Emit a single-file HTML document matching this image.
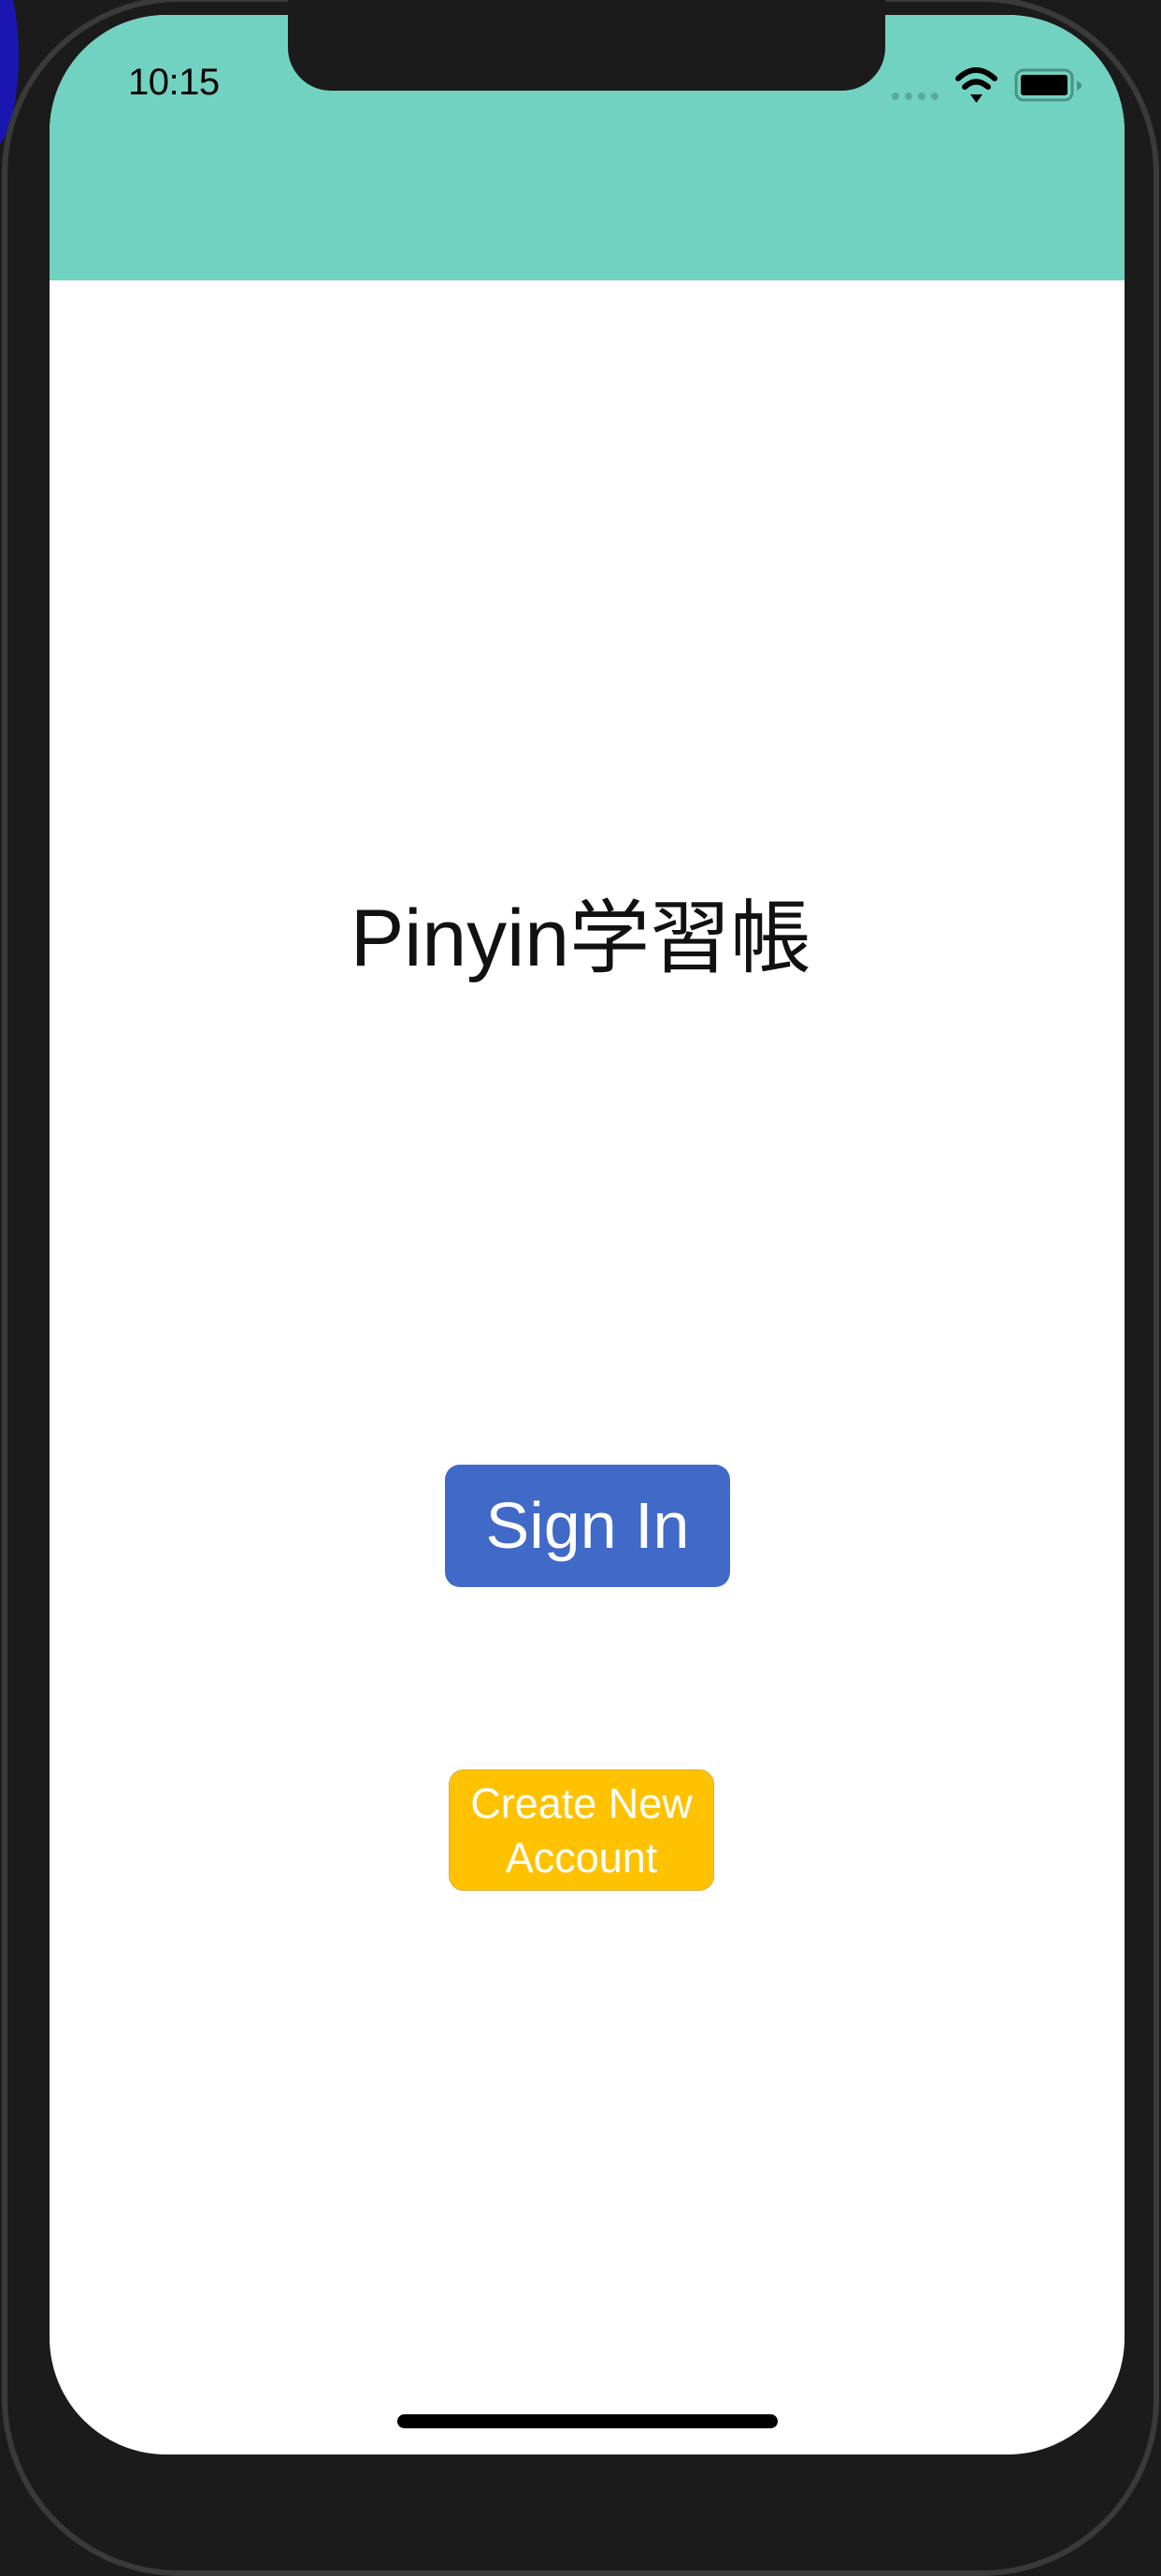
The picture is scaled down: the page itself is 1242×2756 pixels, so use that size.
<!DOCTYPE html>
<html><head><meta charset="utf-8"><style>
html,body{margin:0;padding:0;}
body{width:1242px;height:2688px;background:#1b1b1b;position:relative;overflow:hidden;font-family:"Liberation Sans","Noto Sans CJK JP",sans-serif;}
.bl{position:absolute;left:-40px;top:-40px;width:60px;height:200px;background:#1a17b0;border-radius:50%;}
.frame{position:absolute;left:2px;top:-4px;width:1238px;height:2760px;border-radius:190px;border:6px solid #3a3a3a;box-sizing:border-box;}
.screen{position:absolute;left:53px;top:16px;width:1150px;height:2610px;background:#fff;border-radius:125px;overflow:hidden;}
.teal{position:absolute;left:0;top:0;width:100%;height:284px;background:#72d2c1;}
.notch{position:absolute;left:308px;top:0;width:639px;height:97px;background:#1b1b1b;border-radius:0 0 46px 46px;}
.time{position:absolute;left:137px;top:66px;font-size:40px;color:#000;letter-spacing:-0.5px;}
.title{position:absolute;left:0;width:1242px;top:933px;text-align:center;font-size:86px;color:#111;}
.signin{position:absolute;left:476px;top:1567px;width:305px;height:131px;background:#4169c8;border-radius:16px;color:#fff;font-size:70px;text-align:center;line-height:131px;}
.create{position:absolute;left:480px;top:1893px;width:284px;height:130px;background:#ffc200;border-radius:16px;border:1px solid #d8b24a;box-sizing:border-box;color:#fff;font-size:45px;text-align:center;line-height:58px;padding-top:7px;}
.home{position:absolute;left:425px;top:2583px;width:407px;height:15px;background:#000;border-radius:8px;}
</style></head><body>
<div class="bl"></div>
<div class="frame"></div>
<div class="screen">
<div class="teal"></div>
</div>
<div class="notch"></div>
<div class="time">10:15</div>
<svg style="position:absolute;left:950px;top:68px" width="220" height="50" viewBox="950 68 220 50">
<g fill="#5aa99a"><circle cx="958" cy="103" r="4"/><circle cx="972" cy="103" r="4"/><circle cx="986" cy="103" r="4"/><circle cx="1000" cy="103" r="4"/></g>
<path d="M1025 84 Q1044 66 1064 84" stroke="#000" stroke-width="6" fill="none" stroke-linecap="round"/>
<path d="M1032 93 Q1044 82 1057 93" stroke="#000" stroke-width="6" fill="none" stroke-linecap="round"/>
<path d="M1038 101 L1051 101 L1044.5 110 Z" fill="#000"/>
<rect x="1087" y="75" width="60" height="32" rx="8" fill="none" stroke="#4a9283" stroke-width="3"/>
<rect x="1092" y="80" width="50" height="22" rx="3" fill="#000"/>
<path d="M1152 86 L1157 90 L1157 93 L1152 97 Z" fill="#4a9283"/>
</svg>
<div class="title">Pinyin学習帳</div>
<div class="signin">Sign In</div>
<div class="create">Create New<br>Account</div>
<div class="home"></div>
</body></html>
